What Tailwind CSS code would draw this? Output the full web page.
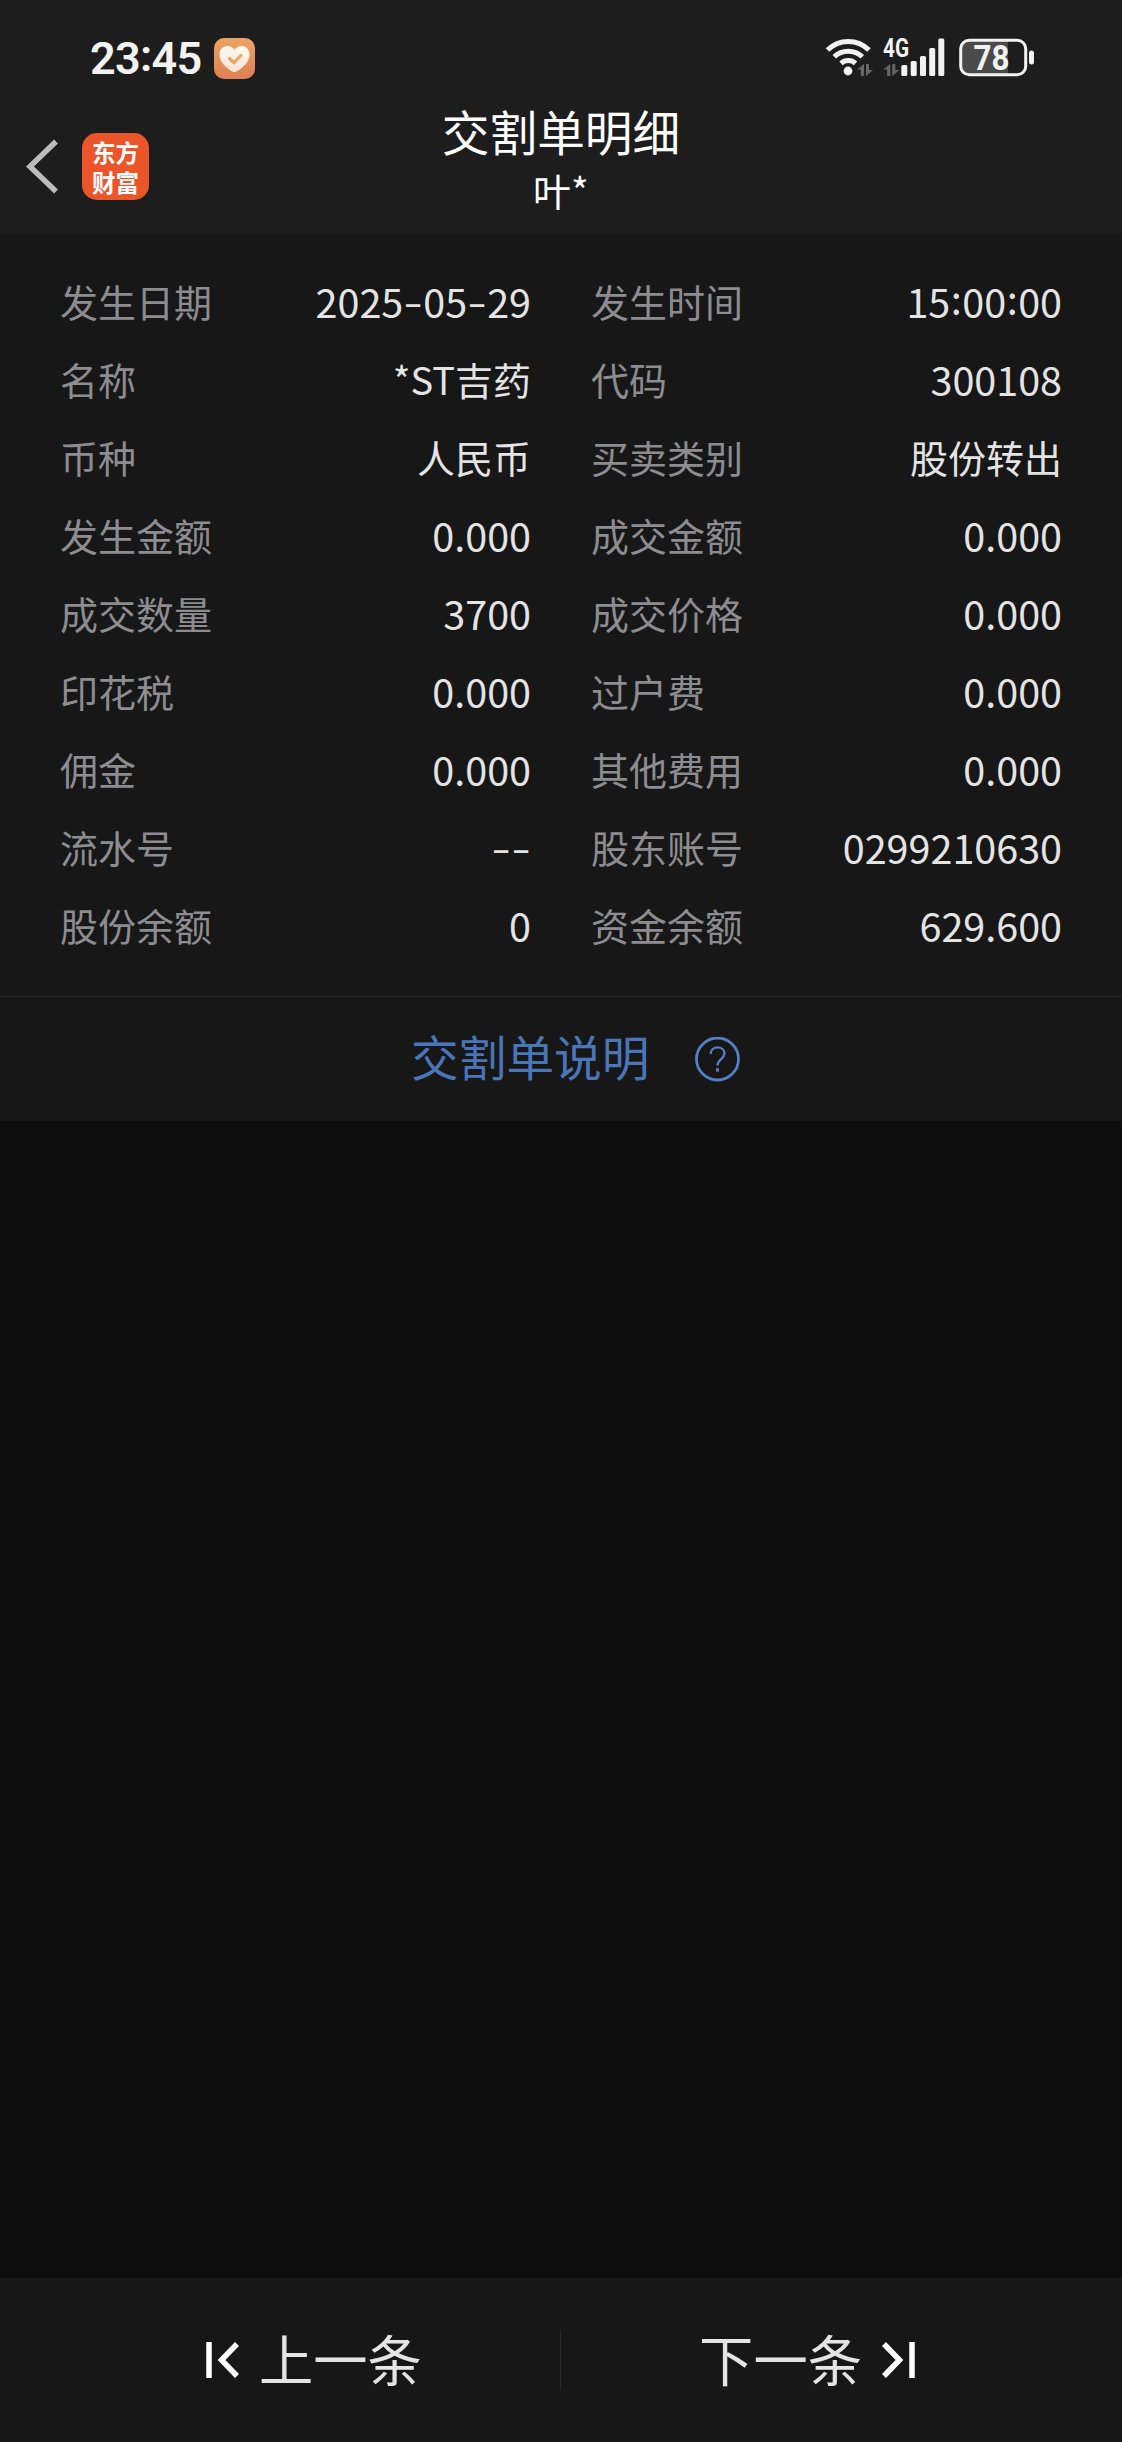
<!DOCTYPE html>
<html lang="zh-CN">
<head>
<meta charset="utf-8">
<title>交割单明细</title>
<script src="https://cdn.jsdelivr.net/npm/@tailwindcss/browser@4"></script>
</head>
<body class="bg-[#0d0d0d] text-[#e4e4e4] font-['Noto_Sans_CJK_SC',sans-serif]">
<div class="w-[1122px] h-[2442px] flex flex-col overflow-hidden">
  <header class="h-[234px] bg-[#1d1d1d] flex flex-col">
    <!-- status bar -->
    <div class="h-[100px] pt-[17px] pl-[90px] pr-[86px] flex items-center justify-between">
      <div class="flex items-center gap-3">
        <span class="w-[112px] whitespace-nowrap font-['Roboto',sans-serif] font-semibold text-[45px] leading-[50px] tracking-[-0.7px] text-[#f2f2f2]">23<span class="relative -top-[3px]">:</span>45</span>
        <svg class="w-[41px] h-[41px]" viewBox="0 0 41 41">
          <defs>
            <linearGradient id="o" x1="0" y1="0" x2="0" y2="1"><stop offset="0" stop-color="#eca462"/><stop offset="1" stop-color="#df8053"/></linearGradient>
            <linearGradient id="h" x1="0" y1="0" x2="0" y2="1"><stop offset="0" stop-color="#fffaf4"/><stop offset="1" stop-color="#fae3d2"/></linearGradient>
          </defs>
          <rect width="41" height="41" rx="10" fill="url(#o)"/>
          <path d="M20.500 34c-3 0-15-8-15-17.500C5.500 11.500 9 8 13 8c3.500 0 6 1.600 7.500 4C22 9.600 24.500 8 28 8c4 0 7.500 3.500 7.500 8.500C35.500 26 23.500 34 20.500 34z" fill="url(#h)"/>
          <path d="M15.500 20.500l4.500 4.300 6.800-7.300" fill="none" stroke="#e9a765" stroke-width="3.200" stroke-linecap="round" stroke-linejoin="round"/>
        </svg>
      </div>
      <svg class="w-[212px] h-[55px] overflow-visible" viewBox="824 31 212 55" fill="none">
        <g stroke="#f2f2f2" stroke-width="5">
          <path d="M827.500 50a29.500 29.500 0 0 1 41.500 0"/>
          <path d="M834.200 56.800a20.300 20.300 0 0 1 28.100 0"/>
          <path d="M841 63.300a10.800 10.800 0 0 1 14.500 0"/>
        </g>
        <circle cx="848" cy="71" r="4.400" fill="#f2f2f2"/>
        <g fill="#666">
          <path id="ar" d="M864 64v12h-3.200v-6.600H857zM866 76V64h3v6h4z"/>
          <use href="#ar" x="26.300"/>
        </g>
        <text x="883" y="57.300" textLength="26" lengthAdjust="spacingAndGlyphs" font-family="Roboto" font-weight="700" font-size="25" fill="#f2f2f2">4G</text>
        <g fill="#f2f2f2">
          <rect x="901.300" y="65" width="6" height="11" rx="1.500"/>
          <rect x="910.700" y="61" width="6" height="15" rx="1.500"/>
          <rect x="920" y="56" width="6" height="20" rx="1.500"/>
          <rect x="929.200" y="48" width="6" height="28" rx="1.500"/>
          <rect x="938.300" y="38.500" width="6" height="37.500" rx="1.500"/>
          <rect x="1029" y="50.500" width="5" height="14" rx="2.500"/>
        </g>
        <path d="M969 40h39v35h-39a8 8 0 0 1-8-8V48a8 8 0 0 1 8-8z" fill="#4a4a4a"/>
        <rect x="960.700" y="40.200" width="65" height="34.600" rx="8.500" stroke="#f2f2f2" stroke-width="3"/>
        <text x="973.500" y="69.700" textLength="36" lengthAdjust="spacingAndGlyphs" font-family="Roboto" font-weight="700" font-size="35" fill="#f2f2f2">78</text>
      </svg>
    </div>
    <!-- title bar -->
    <div class="h-[134px] grid grid-cols-[1fr_auto_1fr] text-white">
      <div class="flex items-start gap-[23px] pl-[26px] pt-[33px]">
        <svg class="w-[33px] h-[67px]" viewBox="0 0 33 67" fill="none"><path d="M30 8.500L4 33.500l26 25" stroke="#bcbcbc" stroke-width="5.500"/></svg>
        <div class="w-[67px] h-[67px] rounded-[15px] bg-[#ea5529] flex flex-col items-center pt-[4px] font-bold text-[23.500px] leading-[30px]">
          <span>东方</span><span>财富</span>
        </div>
      </div>
      <div class="flex flex-col items-center">
        <h1 class="text-[47.700px] leading-[60px] font-normal mt-px">交割单明细</h1>
        <p class="text-[38px] leading-[56px] mt-px">叶*</p>
      </div>
      <div></div>
    </div>
  </header>

  <main class="bg-[#171717] px-[60px] py-[30px] h-[762px] grid grid-cols-2 gap-x-[60px] auto-rows-[78px] text-[38px] leading-[74px]">
    <div class="flex justify-between"><span class="text-[#8d8c91]">发生日期</span><span class="flex text-[39.500px]">2025<i class="w-5 not-italic text-center scale-x-[1.4] -translate-y-px">-</i>05<i class="w-5 not-italic text-center scale-x-[1.4] -translate-y-px">-</i>29</span></div>
    <div class="flex justify-between"><span class="text-[#8d8c91]">发生时间</span><span class="flex text-[39.500px]">15<i class="w-3 not-italic text-center -translate-y-[3px]">:</i>00<i class="w-3 not-italic text-center -translate-y-[3px]">:</i>00</span></div>
    <div class="flex justify-between"><span class="text-[#8d8c91]">名称</span><span>*ST吉药</span></div>
    <div class="flex justify-between"><span class="text-[#8d8c91]">代码</span><span class="text-[39.500px]">300108</span></div>
    <div class="flex justify-between"><span class="text-[#8d8c91]">币种</span><span>人民币</span></div>
    <div class="flex justify-between"><span class="text-[#8d8c91]">买卖类别</span><span>股份转出</span></div>
    <div class="flex justify-between"><span class="text-[#8d8c91]">发生金额</span><span class="text-[39.500px]">0.000</span></div>
    <div class="flex justify-between"><span class="text-[#8d8c91]">成交金额</span><span class="text-[39.500px]">0.000</span></div>
    <div class="flex justify-between"><span class="text-[#8d8c91]">成交数量</span><span class="text-[39.500px]">3700</span></div>
    <div class="flex justify-between"><span class="text-[#8d8c91]">成交价格</span><span class="text-[39.500px]">0.000</span></div>
    <div class="flex justify-between"><span class="text-[#8d8c91]">印花税</span><span class="text-[39.500px]">0.000</span></div>
    <div class="flex justify-between"><span class="text-[#8d8c91]">过户费</span><span class="text-[39.500px]">0.000</span></div>
    <div class="flex justify-between"><span class="text-[#8d8c91]">佣金</span><span class="text-[39.500px]">0.000</span></div>
    <div class="flex justify-between"><span class="text-[#8d8c91]">其他费用</span><span class="text-[39.500px]">0.000</span></div>
    <div class="flex justify-between"><span class="text-[#8d8c91]">流水号</span><span class="flex text-[39.500px]"><i class="w-5 not-italic text-center scale-x-[1.4] -translate-y-px">-</i><i class="w-5 not-italic text-center scale-x-[1.4] -translate-y-px">-</i></span></div>
    <div class="flex justify-between"><span class="text-[#8d8c91]">股东账号</span><span class="text-[39.500px]">0299210630</span></div>
    <div class="flex justify-between"><span class="text-[#8d8c91]">股份余额</span><span class="text-[39.500px]">0</span></div>
    <div class="flex justify-between"><span class="text-[#8d8c91]">资金余额</span><span class="text-[39.500px]">629.600</span></div>
  </main>

  <section class="h-[125px] bg-[#171717] border-t border-[#282828] flex items-center pl-[411px] gap-[46px] text-[#4a76b9]">
    <a class="text-[47.700px] leading-[60px] pb-[6px]">交割单说明</a>
    <svg class="w-[45px] h-[45px]" viewBox="0 0 45 45" fill="none" stroke="#527fc6">
      <circle cx="22.500" cy="22" r="21" stroke-width="2.800"/>
      <path d="M15.700 17c0-4.200 3-6.700 6.900-6.700 4 0 6.800 2.600 6.800 6.200 0 5.200-6.900 6.200-6.900 12" stroke-width="2.300"/>
      <path d="M22.500 31.300v3.400" stroke-width="3"/>
    </svg>
  </section>

  <div class="flex-1"></div>

  <footer class="h-[164px] bg-[#171717] flex items-center text-[54.300px] leading-[70px]">
    <div class="flex-1 flex items-center pl-[206px] gap-5">
      <svg class="w-[33px] h-[36px]" viewBox="0 0 33 36" fill="none" stroke="#fff" stroke-width="5.500"><path d="M3 0v36M31 2L15.500 18 31 34"/></svg>
      <span class="pb-[5px]">上一条</span>
    </div>
    <div class="w-px h-[60px] bg-[#262626]"></div>
    <div class="flex-1 flex items-center justify-end pr-[207px] gap-5">
      <span class="pb-[5px]">下一条</span>
      <svg class="w-[33px] h-[36px]" viewBox="0 0 33 36" fill="none" stroke="#fff" stroke-width="5.500"><path d="M30 0v36M2 2l15.500 16L2 34"/></svg>
    </div>
  </footer>
</div>
</body>
</html>
